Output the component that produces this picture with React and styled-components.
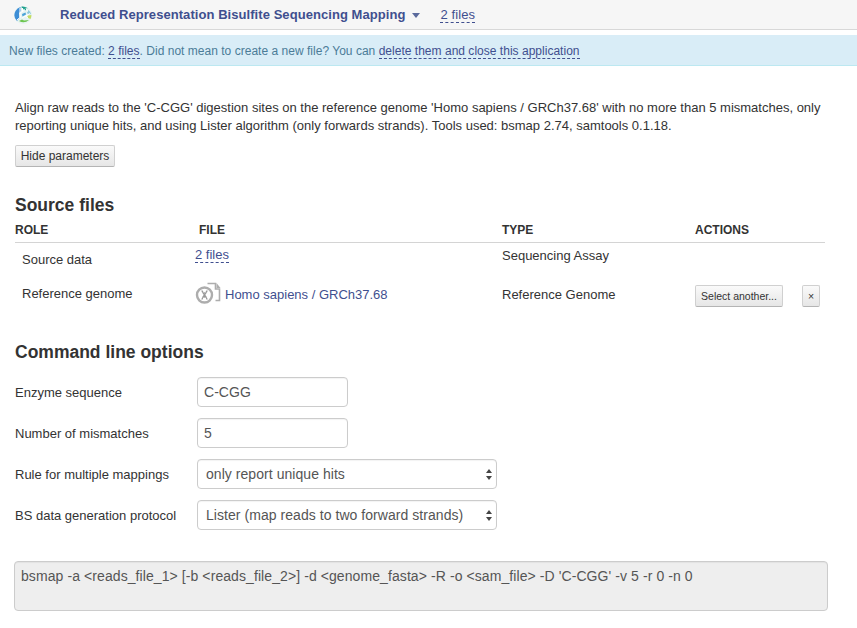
import React from 'react';
import styled, { createGlobalStyle } from 'styled-components';

const Global = createGlobalStyle`
html, body {
  margin: 0;
  padding: 0;
  background: #fff;
  font-family: "Liberation Sans", Arial, sans-serif;
  font-size: 13px;
  line-height: 18px;
  color: #333;
}
* { box-sizing: border-box; }
`;

const Page = styled.div`
width: 857px;
height: 628px;
overflow: hidden;
`;

const TopBar = styled.div`
display: flex;
align-items: center;
height: 30px;
padding: 0 0 0 14px;
background: #f6f6f6;
border-bottom: 1px solid #d8d8d8;
`;

const Logo = styled.svg`
width: 18px;
height: 20px;
margin-right: 28px;
flex: none;
`;

const ToolName = styled.span`
font-weight: bold;
font-size: 13px;
letter-spacing: 0.06px;
color: #3f4f8f;
`;

const Caret = styled.span`
width: 0;
height: 0;
margin: 2px 0 0 7px;
border-left: 4.5px solid transparent;
border-right: 4.5px solid transparent;
border-top: 5px solid #5a6a9c;
`;

const DashedLink = styled.a`
color: #3f4f8f;
border-bottom: 1px dashed #3f4f8f;
line-height: 14px;
display: inline-block;
`;

const BarFiles = styled(DashedLink)`
margin-left: 20px;
margin-top: 1px;
letter-spacing: 0.1px;
`;

const Notice = styled.div`
height: 31px;
margin-top: 5px;
padding: 8px 9px 0;
background: #d9edf7;
border-bottom: 1px solid #bce8f1;
color: #4b7c98;
font-size: 12px;
letter-spacing: 0.02px;
line-height: 16px;
`;

const NoticeLink = styled(DashedLink)`
line-height: 13px;
`;

const Content = styled.div`
padding: 33px 15px 0;
`;

const Description = styled.p`
margin: 0;
width: 830px;
line-height: 18px;
`;

const Button = styled.button`
font-family: inherit;
font-size: 12px;
color: #333;
background: linear-gradient(to bottom, #fafafa 0%, #e6e6e6 100%);
border: 1px solid #d0d0d0;
border-bottom-color: #b4b4b4;
border-radius: 2px;
padding: 0;
line-height: 16px;
`;

const ToggleButton = styled(Button)`
display: block;
width: 100px;
height: 22px;
margin-top: 10px;
`;

const SectionTitle = styled.h3`
margin: ${(p) => p.$top}px 0 0;
font-size: 17.5px;
line-height: 22px;
font-weight: bold;
color: #333;
`;

const FilesTable = styled.div`
width: 810px;
margin-top: 5px;
`;

const Row = styled.div`
display: grid;
grid-template-columns: 180px 307px 193px 130px;
`;

const HeadRow = styled(Row)`
height: 22px;
padding-top: 1px;
border-bottom: 1px solid #d4d4d4;
font-weight: bold;
font-size: 12px;
line-height: 16px;
color: #333;
`;

const HeadCell = styled.div`
padding-left: ${(p) => p.$pad || 0}px;
`;

const BodyRow = styled(Row)`
height: ${(p) => p.$height}px;
`;

const Cell = styled.div`
padding-left: ${(p) => p.$pad || 0}px;
padding-top: ${(p) => p.$top || 0}px;
display: flex;
align-items: flex-start;
`;

const FileLink = styled.a`
color: #3f4f8f;
`;

const GenomeIcon = styled.svg`
width: 26px;
height: 24px;
margin: -4px 4px 0 0;
flex: none;
`;

const SmallButton = styled(Button)`
font-size: 10.5px;
height: 22px;
`;

const SelectButton = styled(SmallButton)`
width: 88px;
`;

const CloseButton = styled(SmallButton)`
width: 18px;
margin-left: 19px;
`;

const OptionRow = styled.div`
display: flex;
align-items: center;
height: 30px;
margin-top: ${(p) => p.$top}px;
`;

const OptionLabel = styled.label`
width: 182px;
flex: none;
padding-top: 2px;
`;

const inputBase = `
height: 30px;
border: 1px solid #ccc;
border-radius: 4px;
background: #fff;
font-family: inherit;
font-size: 14px;
letter-spacing: 0.05px;
color: #555;
box-shadow: inset 0 1px 1px rgba(0,0,0,0.05);
`;

const TextBox = styled.div`
${inputBase}
width: 151px;
padding: 5px 6px;
line-height: 18px;
`;

const SelectBox = styled.div`
${inputBase}
width: 300px;
padding: 5px 8px;
line-height: 18px;
position: relative;
`;

const Arrows = styled.span`
position: absolute;
right: 3px;
top: 9px;
width: 7px;
height: 11px;
&::before, &::after {
  content: '';
  position: absolute;
  left: 0;
  width: 0;
  height: 0;
  border-left: 3.5px solid transparent;
  border-right: 3.5px solid transparent;
}
&::before {
  top: 0;
  border-bottom: 4.5px solid #444;
}
&::after {
  bottom: 0;
  border-top: 4.5px solid #444;
}
`;

const CommandBox = styled.div`
width: 814px;
height: 50px;
margin: 31px 0 0 -1px;
padding: 5px 6px;
background: #eee;
border: 1px solid #ccc;
border-radius: 4px;
font-size: 14px;
letter-spacing: 0.085px;
line-height: 18px;
color: #555;
box-shadow: inset 0 1px 1px rgba(0,0,0,0.05);
`;

const options = [
  { label: 'Enzyme sequence', value: 'C-CGG', top: 14 },
  { label: 'Number of mismatches', value: '5', top: 11 },
  { label: 'Rule for multiple mappings', value: 'only report unique hits', select: true, top: 11 },
  { label: 'BS data generation protocol', value: 'Lister (map reads to two forward strands)', select: true, top: 11 },
];

const AppLogo = () => (
  <Logo viewBox="0 0 18 20">
    <circle cx="9" cy="10" r="9" fill="#e6f3f2" />
    <path d="M1.500 6a8.500 8.500 0 0 1 5-4l.5 4-2 2 .5 5-2.500 3A8.500 8.500 0 0 1 1.500 6z" fill="#3d8ed6" />
    <path d="M7.500 1.500a8.500 8.500 0 0 1 6 1.500l-2 2.500-1.500-2-1.500 2z" fill="#1fa08c" />
    <path d="M14.500 5a8 8 0 0 1 2.500 4l-3 .5-1-2z" fill="#8fc9dc" />
    <path d="M17.400 10a8.500 8.500 0 0 1-.9 4l-3.500-1.500 1-2z" fill="#c4dc62" />
    <path d="M5 16l3-1.500 2 1 5-.5a8.500 8.500 0 0 1-10 1z" fill="#6ec54f" />
    <path d="M8 9l3.500-1.500.5 2-3.500 2z" fill="#4aa3d8" />
    <path d="M6 3v9M6 8l4-2.500M8.500 6.500V3M8 13l8-4.500M11.500 11l2.500 2M3 15l4-3.500M12 3l1.500 3.500" stroke="#fff" strokeWidth="1" fill="none" />
  </Logo>
);

const GenomeFileIcon = () => (
  <GenomeIcon viewBox="0 0 26 24">
    <path d="M12.500 1.500h8v5.500h4v11.500h-4" fill="#fff" stroke="#adadad" strokeWidth="1.600" />
    <path d="M21.500 1l4 5h-4z" fill="#adadad" />
    <circle cx="9.500" cy="13" r="7.500" fill="#fff" stroke="#adadad" strokeWidth="2.400" />
    <path d="M7 8.500c0 2.500 5 6 5 9M12 8.500c0 2.500-5 6-5 9" fill="none" stroke="#999" strokeWidth="1.500" />
    <path d="M7.500 10.500h4M7.500 15.500h4" stroke="#bbb" strokeWidth="1" />
  </GenomeIcon>
);

const App = () => (
  <Page>
    <Global />
    <TopBar>
      <AppLogo />
      <ToolName>Reduced Representation Bisulfite Sequencing Mapping</ToolName>
      <Caret />
      <BarFiles>2 files</BarFiles>
    </TopBar>
    <Notice>
      New files created: <NoticeLink>2 files</NoticeLink>. Did not mean to create a new file? You can{' '}
      <NoticeLink>delete them and close this application</NoticeLink>
    </Notice>
    <Content>
      <Description>
        Align raw reads to the 'C-CGG' digestion sites on the reference genome 'Homo sapiens / GRCh37.68' with no more than 5 mismatches, only reporting unique hits, and using Lister algorithm (only forwards strands). Tools used: bsmap 2.74, samtools 0.1.18.
      </Description>
      <ToggleButton>Hide parameters</ToggleButton>
      <SectionTitle $top={27}>Source files</SectionTitle>
      <FilesTable>
        <HeadRow>
          <HeadCell>ROLE</HeadCell>
          <HeadCell $pad={4}>FILE</HeadCell>
          <HeadCell>TYPE</HeadCell>
          <HeadCell>ACTIONS</HeadCell>
        </HeadRow>
        <BodyRow $height={35}>
          <Cell $pad={7} $top={8}>Source data</Cell>
          <Cell $top={5}><DashedLink>2 files</DashedLink></Cell>
          <Cell $top={4}>Sequencing Assay</Cell>
          <Cell />
        </BodyRow>
        <BodyRow $height={40}>
          <Cell $pad={7} $top={7}>Reference genome</Cell>
          <Cell $top={8}>
            <GenomeFileIcon />
            <FileLink>Homo sapiens / GRCh37.68</FileLink>
          </Cell>
          <Cell $top={8}>Reference Genome</Cell>
          <Cell $top={7}>
            <SelectButton>Select another...</SelectButton>
            <CloseButton>×</CloseButton>
          </Cell>
        </BodyRow>
      </FilesTable>
      <SectionTitle $top={23}>Command line options</SectionTitle>
      {options.map((o) => (
        <OptionRow key={o.label} $top={o.top}>
          <OptionLabel>{o.label}</OptionLabel>
          {o.select ? (
            <SelectBox>{o.value}<Arrows /></SelectBox>
          ) : (
            <TextBox>{o.value}</TextBox>
          )}
        </OptionRow>
      ))}
      <CommandBox>
        {"bsmap -a <reads_file_1> [-b <reads_file_2>] -d <genome_fasta> -R -o <sam_file> -D 'C-CGG' -v 5 -r 0 -n 0"}
      </CommandBox>
    </Content>
  </Page>
);

export default App;
